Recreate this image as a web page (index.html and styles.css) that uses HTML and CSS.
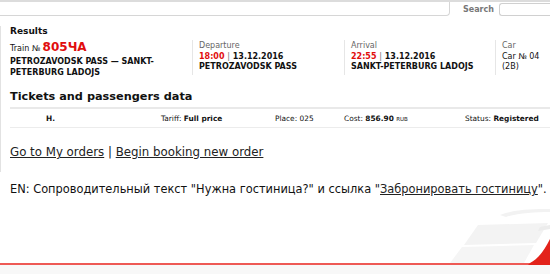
FILE: index.html
```html
<!DOCTYPE html>
<html lang="en">
<head>
  <meta charset="UTF-8" />
  <title>Results</title>
  <link rel="stylesheet" href="styles.css">
</head>
<body>
  <header class="top">
    <input class="top-field" type="text">
    <span class="search-label">Search</span>
    <input class="search-field" type="text">
  </header>

  <main class="results">
    <h2 class="results-title">Results</h2>

    <div class="trip">
      <div class="trip-col train">
        <div class="train-no">Train № <span class="red big">805ЧА</span></div>
        <div class="strong">PETROZAVODSK PASS — SANKT-PETERBURG LADOJS</div>
      </div>
      <div class="trip-col dep">
        <div class="label">Departure</div>
        <div class="strong"><span class="red">18:00</span> <span class="sep">|</span> 13.12.2016</div>
        <div class="strong">PETROZAVODSK PASS</div>
      </div>
      <div class="trip-col arr">
        <div class="label">Arrival</div>
        <div class="strong"><span class="red">22:55</span> <span class="sep">|</span> 13.12.2016</div>
        <div class="strong">SANKT-PETERBURG LADOJS</div>
      </div>
      <div class="trip-col car">
        <div class="label">Car</div>
        <div>Car № 04</div>
        <div>(2B)</div>
      </div>
    </div>

    <h2 class="section-title">Tickets and passengers data</h2>
    <div class="ticket-row">
      <span class="t-name">Н.</span>
      <span>Tariff: <b>Full price</b></span>
      <span>Place: 025</span>
      <span>Cost: <b>856.90</b> <small>RUB</small></span>
      <span>Status: <b>Registered</b></span>
    </div>

    <p class="links"><a href="#">Go to My orders</a> | <a href="#">Begin booking new order</a></p>
  </main>

  <p class="note">EN: Сопроводительный текст "Нужна гостиница?" и ссылка "<a href="#">Забронировать гостиницу</a>".</p>

  <footer class="bottom">
    <svg class="swoosh" width="110" height="64" viewBox="0 0 110 64">
      <path d="M60 14 C75 8 95 8 110 8 L110 11 C95 11 78 12 66 16 Z" fill="#f2f2f2"/>
      <path d="M38 24 L108 22 L96 42 L24 44 Z" fill="#f3f3f3"/>
      <path d="M22 46 L94 44 L84 62 L10 62 Z" fill="#f5f5f5"/>
      <path d="M100 26 L110 24 L110 28 L98 30 Z" fill="#ececec"/>
      <path d="M90 62 C98 58 104 50 110 38 L110 64 L88 64 Z" fill="#e3231b"/>
    </svg>
  </footer>
</body>
</html>
```

FILE: styles.css
```css
body {
  margin: 0;
  padding: 0;
  font-family: "DejaVu Sans", Verdana, sans-serif;
  color: #111;
  background: #fff;
  border-top: 2px solid #dcdcdc;
  height: 272px;
  display: flex;
  flex-direction: column;
  overflow: hidden;
}

.top {
  display: flex;
  align-items: center;
  height: 14px;
}

.top-field {
  flex: 1;
  height: 14px;
  box-sizing: border-box;
  border: 1px solid #d6d6d6;
  border-left: none;
  border-top: none;
  border-radius: 0 0 4px 0;
  padding: 0;
}

.search-label {
  font-size: 8px;
  font-weight: bold;
  color: #777;
  margin: 0 5px 0 13px;
}

.search-field {
  width: 51px;
  height: 13px;
  box-sizing: border-box;
  border: 1px solid #d0d0d0;
  border-right: none;
  border-radius: 3px 0 0 3px;
  padding: 0;
  margin-top: 1px;
}

.results {
  margin-top: 10px;
  border-left: 1px solid #e2e2e2;
  padding-left: 9px;
  padding-bottom: 13px;
}

.results-title {
  font-size: 9px;
  margin: 0;
  line-height: 10px;
}

.trip {
  display: flex;
  margin-top: 4px;
  font-size: 8px;
  line-height: 10.5px;
}

.trip-col {
  box-sizing: border-box;
}

.train { width: 182px; line-height: 11px; }
.dep, .arr, .car {
  border-left: 1px solid #e6e6e6;
  padding-left: 6px;
  padding-top: 1px;
  height: 35px;
}
.dep { width: 152px; }
.arr { width: 151px; }
.car { flex: 1; }

.train-no {
  font-size: 8px;
  line-height: 14px;
}

.red { color: #e10d0d; font-weight: bold; }
.big { font-size: 12px; }
.strong { font-weight: bold; }
.sep { color: #777; font-weight: normal; }
.label { color: #666; }

.section-title {
  font-size: 11.3px;
  margin: 12px 0 0 0;
  line-height: 14px;
}

.ticket-row {
  display: grid;
  grid-template-columns: 151px 114px 69px 121px 1fr;
  margin-top: 3px;
  border-top: 2px solid #e9e9e9;
  border-bottom: 1px solid #ececec;
  height: 18px;
  align-items: center;
  font-size: 7.4px;
}

.ticket-row small { font-size: 5.5px; }

.t-name { padding-left: 36px; font-weight: bold; }

.links {
  font-size: 11.8px;
  line-height: 14px;
  margin: 17px 0 0 0;
}

.links a, .note a {
  color: #222;
}

.note {
  font-size: 11.4px;
  line-height: 14px;
  margin: 10px 0 0 10px;
  white-space: nowrap;
}

.bottom {
  margin-top: auto;
  height: 9px;
  border-top: 2px solid #ee5a55;
  background: #f8f8f8;
  position: relative;
}

.swoosh {
  position: absolute;
  right: 0;
  bottom: 9px;
}
```
